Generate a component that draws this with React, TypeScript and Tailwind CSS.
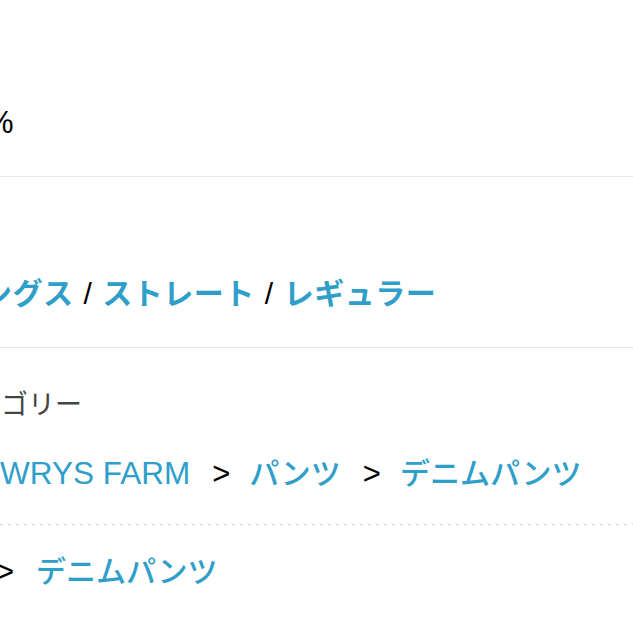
const FONT = "font-['Liberation_Sans','Noto_Sans_CJK_JP',sans-serif]";

function Sep({ children }: { children: string }) {
    return <span className="text-[31px] text-black font-normal ml-[22px] mr-[19px]">{children}</span>;
}

export default function App() {
    return (
        <div className={`w-[633px] h-[633px] overflow-hidden bg-white ${FONT}`}>
            {/* 素材 */}
            <div className="pt-[105px] pb-[35px] border-b border-[#e8e8e8]">
                <p className="ml-[-14px] text-[31px] leading-[36px] text-black whitespace-nowrap">%</p>
            </div>

            {/* シルエット */}
            <div className="pt-[99px] pb-[35px] border-b border-[#e8e8e8]">
                <p className="ml-[-18px] text-[30px] leading-[36px] font-semibold text-[#2f9ec9] whitespace-nowrap tracking-[0.5px]">
                    ングス
                    <span className="text-black font-normal mx-[10px]">/</span>
                    ストレート
                    <span className="text-black font-normal mx-[10px]">/</span>
                    レギュラー
                </p>
            </div>

            {/* カテゴリー */}
            <div className="pt-[39px]">
                <p className="ml-[1px] text-[27px] leading-[36px] text-[#444]">ゴリー</p>
                <div className="mt-[32px] pb-[33px] bg-[linear-gradient(to_right,#bdbdbd_2px,transparent_2px)] bg-[length:8px_1px] bg-bottom bg-repeat-x">
                    <p className="text-[30px] leading-[36px] font-medium text-[#2f9ec9] whitespace-nowrap">
                        <span className="text-[31.5px]">WRYS FARM</span>
                        <Sep>&gt;</Sep>
                        パンツ
                        <Sep>&gt;</Sep>
                        デニムパンツ
                    </p>
                </div>
                <p className="mt-[29px] ml-[-4px] text-[30px] leading-[36px] font-medium text-[#2f9ec9] whitespace-nowrap">
                    <span className="text-[31px] text-black font-normal mr-[22px]">&gt;</span>
                    デニムパンツ
                </p>
            </div>
        </div>
    );
}
